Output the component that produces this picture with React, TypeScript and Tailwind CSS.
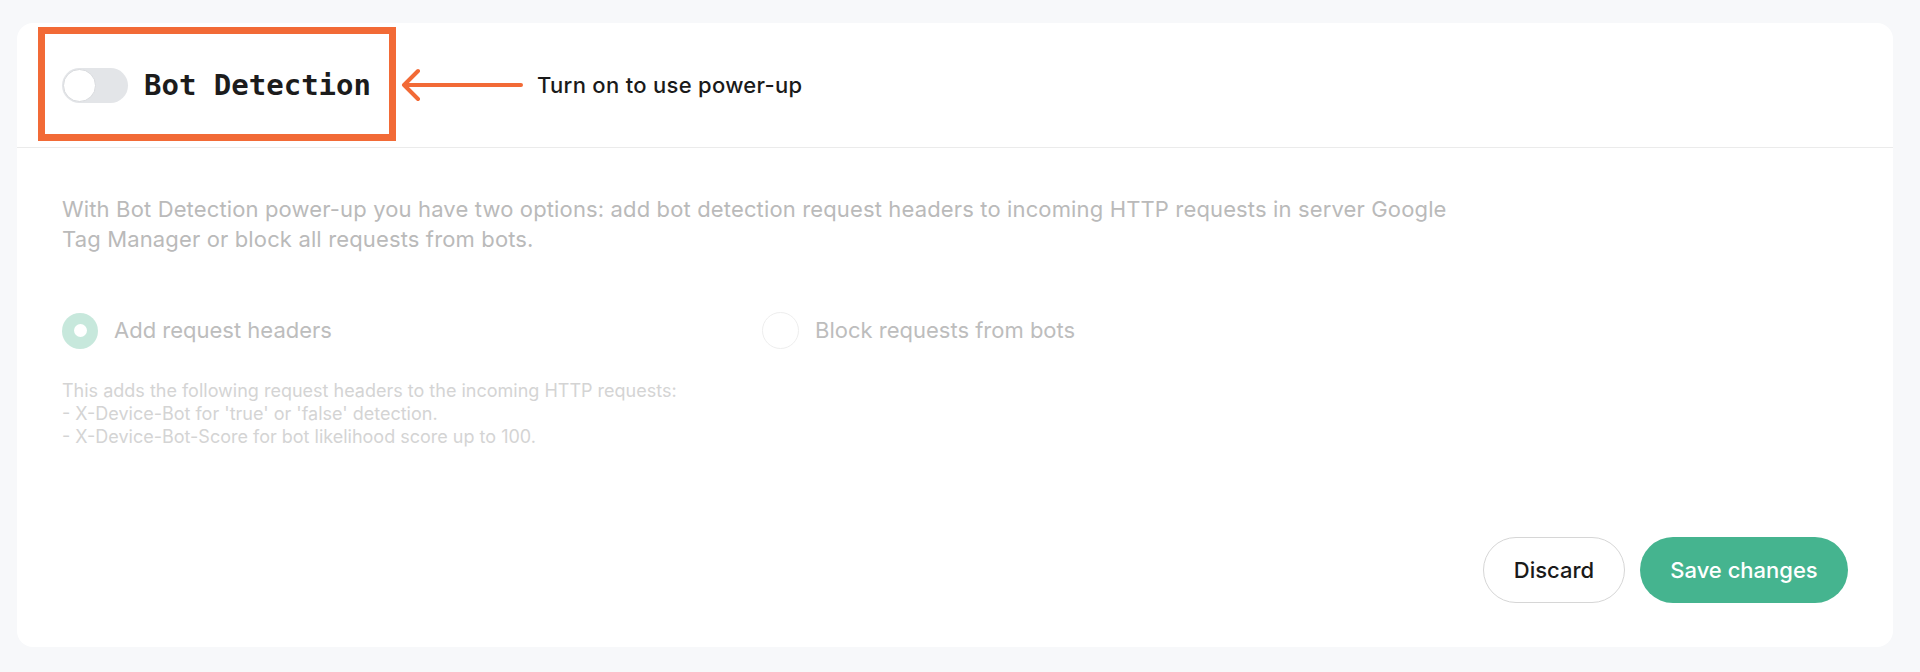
import React, { useState } from 'react';

const sans = "font-['Inter','Noto_Sans',sans-serif]";

const App = () => {
  const [mode, setMode] = useState<'headers' | 'block'>('headers');

  return (
    <div className={`min-h-screen bg-[#f7f8fa] pl-[17px] pr-[27px] pt-[23px] pb-[25px] ${sans}`}>
      <div className="relative flex h-[624px] flex-col rounded-[16px] bg-white">
        {/* Header with toggle */}
        <div className="flex h-[125px] items-center border-b border-[#ebebeb] px-[45px]">
          <button className="relative h-[35px] w-[66px] shrink-0 rounded-full bg-[#e3e5e8]">
            <span className="absolute left-[1px] top-[1px] h-[33px] w-[33px] rounded-full border border-[#d9dbde] bg-white" />
          </button>
          <h2 className="ml-[16px] font-['DejaVu_Sans_Mono',monospace] text-[29px] font-bold leading-none text-[#1c1c1c]">
            Bot Detection
          </h2>

          <svg className="ml-[30px] shrink-0" width="122" height="34" viewBox="0 0 122 34" fill="none">
            <path d="M120 17H3M17 3L3 17L17 31" stroke="#f26a36" strokeWidth="4" strokeLinecap="round" strokeLinejoin="round" />
          </svg>
          <span className="ml-[14px] text-[22px] font-medium tracking-[0.3px] text-[#1a1a1a]">Turn on to use power-up</span>
        </div>

        {/* annotation box */}
        <div className="pointer-events-none absolute left-[21px] top-[4px] h-[114px] w-[358px] border-[7px] border-[#f26a36]" />

        {/* Body */}
        <div className="flex flex-1 flex-col px-[45px] pb-[44px] pt-[46px]">
          <p className="max-w-[1410px] text-[22px] leading-[30px] tracking-[0.14px] text-[#bababa]">
            With Bot Detection power-up you have two options: add bot detection request headers to incoming HTTP requests in server Google Tag Manager or block all requests from bots.
          </p>

          <div className="mt-[58px] flex items-center">
            <label className="flex w-[700px] cursor-pointer items-center gap-[16px]" onClick={() => setMode('headers')}>
              <span className="flex h-[36px] w-[36px] items-center justify-center rounded-full bg-[#c7e8dc]">
                {mode === 'headers' && <span className="h-[13px] w-[13px] rounded-full bg-white" />}
              </span>
              <span className="text-[22px] text-[#bdbdbd]">Add request headers</span>
            </label>
            <label className="flex cursor-pointer items-center gap-[16px]" onClick={() => setMode('block')}>
              <span className="flex h-[37px] w-[37px] items-center justify-center rounded-full border border-[#eeeeee] bg-white">
                {mode === 'block' && <span className="h-[13px] w-[13px] rounded-full bg-[#c7e8dc]" />}
              </span>
              <span className="text-[22px] text-[#bdbdbd]">Block requests from bots</span>
            </label>
          </div>

          <div className="mt-[30px] text-[18px] leading-[23px] text-[#d4d4d4]">
            <p>This adds the following request headers to the incoming HTTP requests:</p>
            <p>- X-Device-Bot for 'true' or 'false' detection.</p>
            <p>- X-Device-Bot-Score for bot likelihood score up to 100.</p>
          </div>

          <div className="mt-auto flex justify-end gap-[15px]">
            <button className="h-[66px] w-[142px] rounded-full border border-[#d6d6d6] bg-white text-[22px] font-medium text-[#1a1a1a]">
              Discard
            </button>
            <button className="h-[66px] w-[208px] rounded-full bg-[#45b48f] text-[22px] font-medium text-white">
              Save changes
            </button>
          </div>
        </div>
      </div>
    </div>
  );
};

export default App;
